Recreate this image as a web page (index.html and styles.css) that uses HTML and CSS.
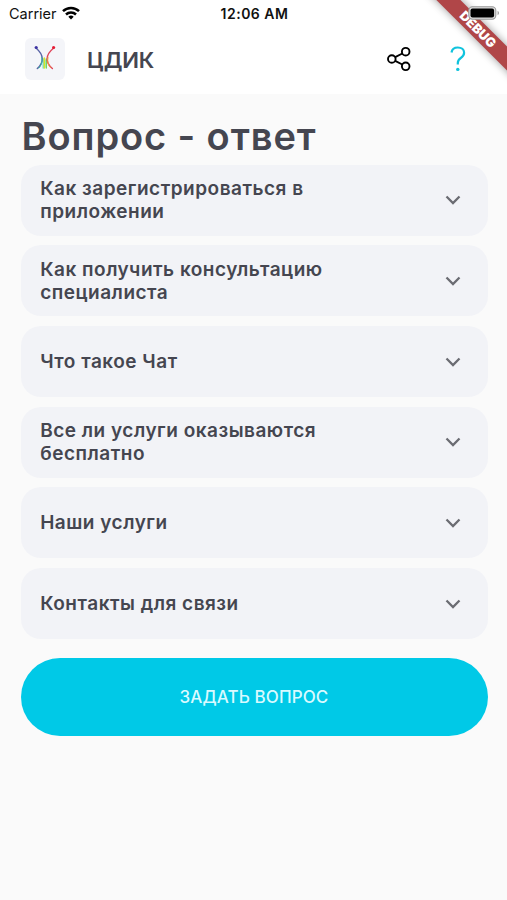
FILE: index.html
```html
<!DOCTYPE html>
<html lang="ru">
<head>
    <meta charset="UTF-8">
    <meta name="viewport" content="width=device-width, initial-scale=1.0">
    <title>ЦДИК</title>
    <link rel="stylesheet" href="styles.css">
</head>
<body>

<header class="header">
    <div class="status-bar">
        <div class="carrier">
            <span>Carrier</span>
            <svg class="wifi" viewBox="0 0 18 14" fill="none" stroke="#000" stroke-width="2.5">
                <path d="M1 5.2a11.4 11.4 0 0 1 16 0"/>
                <path d="M4 8.5a7.2 7.2 0 0 1 10 0"/>
                <path d="M9 13.4L6.3 10.7a3.9 3.9 0 0 1 5.4 0z" fill="#000" stroke="none"/>
            </svg>
        </div>
        <span class="time">12:06 AM</span>
        <svg class="battery" viewBox="0 0 32 14">
            <rect x=".8" y=".8" width="27" height="12.4" rx="3.6" fill="#ddd" stroke="#999" stroke-width="1.1"/>
            <rect x="2.5" y="2.5" width="23.6" height="9" rx="2" fill="#000"/>
            <path d="M29.6 4.8v4.4q1.4-.8 1.4-2.2t-1.4-2.2z" fill="#999"/>
        </svg>
    </div>
    <div class="app-bar">
        <div class="logo">
            <svg viewBox="0 0 40 42" fill="none" stroke-linecap="round">
                <path d="M18.2 21v9M19.7 22v7" stroke="#62d4c8" stroke-width="1.3"/>
                <path d="M19.3 20v10" stroke="#d8e52a" stroke-width="1.5"/>
                <path d="M21.3 21v9" stroke="#74d957" stroke-width="1.4"/>
                <path d="M11.5 10.5c7 6 8 14 .8 20" stroke="#5863a5" stroke-width="1.4"/>
                <path d="M16.6 19.5c1 4 0 7.5-2.7 10.5" stroke="#35bfa0" stroke-width="1"/>
                <path d="M28.2 10.5c-7.5 6-8.4 14-.8 20" stroke="#e0455a" stroke-width="1.4"/>
                <path d="M23 19.5c-.8 4 0 7.5 2.5 10" stroke="#eda044" stroke-width="1"/>
                <circle cx="11.2" cy="9.5" r="1.6" fill="#3b32a2"/>
                <circle cx="28.6" cy="9.5" r="1.6" fill="#e51c35"/>
            </svg>
        </div>
        <span class="app-name">ЦДИК</span>
        <svg class="share" viewBox="0 0 24 26" fill="none" stroke="#000" stroke-width="1.9">
            <circle cx="4.8" cy="13" r="3.8"/>
            <circle cx="18.7" cy="5.7" r="3.8"/>
            <circle cx="18.7" cy="20.3" r="3.8"/>
            <path d="M8.2 11.2l7.1-3.7M8.2 14.8l7.1 3.7"/>
        </svg>
        <svg class="help" viewBox="0 0 16 26" fill="none" stroke="#10c3dd" stroke-width="2.2">
            <path d="M1.5 6.5C2 3.2 4.4 1.5 7.8 1.5c3.7 0 6.3 2.1 6.3 5.3 0 2.6-1.4 3.9-3.3 5.2-2.2 1.5-3 2.6-3 4.9v1.7"/>
            <circle cx="7.8" cy="23.4" r="1.7" fill="#10c3dd" stroke="none"/>
        </svg>
    </div>
</header>

<main class="content">
    <h1 class="title">Вопрос - ответ</h1>

    <div class="faq">
        <div class="faq-item">
            <span>Как зарегистрироваться в<br>приложении</span>
            <svg class="arrow" viewBox="0 0 16 10"><path d="M1.5 1.5L8 8l6.5-6.5"/></svg>
        </div>
        <div class="faq-item">
            <span>Как получить консультацию<br>специалиста</span>
            <svg class="arrow" viewBox="0 0 16 10"><path d="M1.5 1.5L8 8l6.5-6.5"/></svg>
        </div>
        <div class="faq-item">
            <span>Что такое Чат</span>
            <svg class="arrow" viewBox="0 0 16 10"><path d="M1.5 1.5L8 8l6.5-6.5"/></svg>
        </div>
        <div class="faq-item">
            <span>Все ли услуги оказываются<br>бесплатно</span>
            <svg class="arrow" viewBox="0 0 16 10"><path d="M1.5 1.5L8 8l6.5-6.5"/></svg>
        </div>
        <div class="faq-item">
            <span>Наши услуги</span>
            <svg class="arrow" viewBox="0 0 16 10"><path d="M1.5 1.5L8 8l6.5-6.5"/></svg>
        </div>
        <div class="faq-item">
            <span>Контакты для связи</span>
            <svg class="arrow" viewBox="0 0 16 10"><path d="M1.5 1.5L8 8l6.5-6.5"/></svg>
        </div>
    </div>

    <button class="ask-btn">ЗАДАТЬ ВОПРОС</button>
</main>

<div class="debug"><div class="ribbon">DEBUG</div></div>

</body>
</html>
```

FILE: styles.css
```css
* {
    box-sizing: border-box;
}
body {
    margin: 0;
    min-height: 900px;
    font-family: Inter, "Liberation Sans", sans-serif;
    background-color: #fafafa;
    color: #454650;
}
.header {
    height: 94px;
    background-color: #fff;
}
.status-bar {
    display: grid;
    grid-template-columns: 1fr auto 1fr;
    align-items: center;
    height: 26px;
    padding: 0 7px 0 9px;
    color: #111;
}
.carrier {
    display: flex;
    align-items: center;
    gap: 5px;
    font-size: 14.5px;
}
.wifi {
    width: 18px;
    height: 14px;
}
.time {
    font-size: 14px;
    font-weight: 600;
    letter-spacing: 0.5px;
}
/* stays above the debug ribbon */
.battery {
    position: relative;
    z-index: 1;
    width: 32px;
    height: 14px;
    justify-self: end;
}
.app-bar {
    display: flex;
    align-items: center;
    height: 66px;
    padding: 0 41px 0 25px;
}
.logo {
    width: 40px;
    height: 42px;
    border-radius: 6px;
    background-color: #f4f5f9;
}
.logo svg {
    display: block;
    width: 40px;
    height: 42px;
}
.app-name {
    margin-left: 22px;
    padding-top: 2px;
    font-size: 22px;
    font-weight: 600;
    letter-spacing: -0.2px;
}
.share {
    width: 24px;
    height: 26px;
    margin-left: auto;
}
.help {
    width: 16px;
    height: 26px;
    margin-left: 39px;
}
.content {
    padding: 22px 19.5px 0 20.5px;
}
.title {
    margin: 0 0 0 1px;
    height: 48.5px;
    line-height: 41px;
    font-size: 38px;
    font-weight: 600;
    letter-spacing: 0.9px;
    white-space: nowrap;
}
.faq {
    display: flex;
    flex-direction: column;
    gap: 9.7px;
}
.faq-item {
    display: flex;
    align-items: center;
    justify-content: space-between;
    height: 71px;
    padding: 0.5px 26.5px 0 19.7px;
    border-radius: 20px;
    background-color: #f2f3f7;
    font-size: 19px;
    font-weight: 600;
    line-height: 23.3px;
    letter-spacing: 0.5px;
    white-space: nowrap;
}
.arrow {
    width: 16px;
    height: 10px;
    fill: none;
    stroke: #6b6c72;
    stroke-width: 2.3;
}
.ask-btn {
    display: block;
    width: 100%;
    height: 78.5px;
    margin-top: 19px;
    border: none;
    border-radius: 40px;
    background-color: #00c9e7;
    color: #d9faff;
    font-family: inherit;
    font-size: 17px;
    font-weight: 500;
    letter-spacing: 0.1px;
    cursor: pointer;
}
/* corner ribbon over the header */
.debug {
    position: absolute;
    top: 0;
    right: 0;
    width: 110px;
    height: 110px;
    overflow: hidden;
}
.ribbon {
    position: absolute;
    top: 21px;
    right: -51px;
    width: 160px;
    height: 16.5px;
    transform: rotate(45deg);
    background-color: #b04648;
    box-shadow: 0 0 8px rgba(0, 0, 0, 0.4);
    color: #fff;
    font-size: 13px;
    font-weight: 900;
    line-height: 16.5px;
    text-align: center;
}
```
